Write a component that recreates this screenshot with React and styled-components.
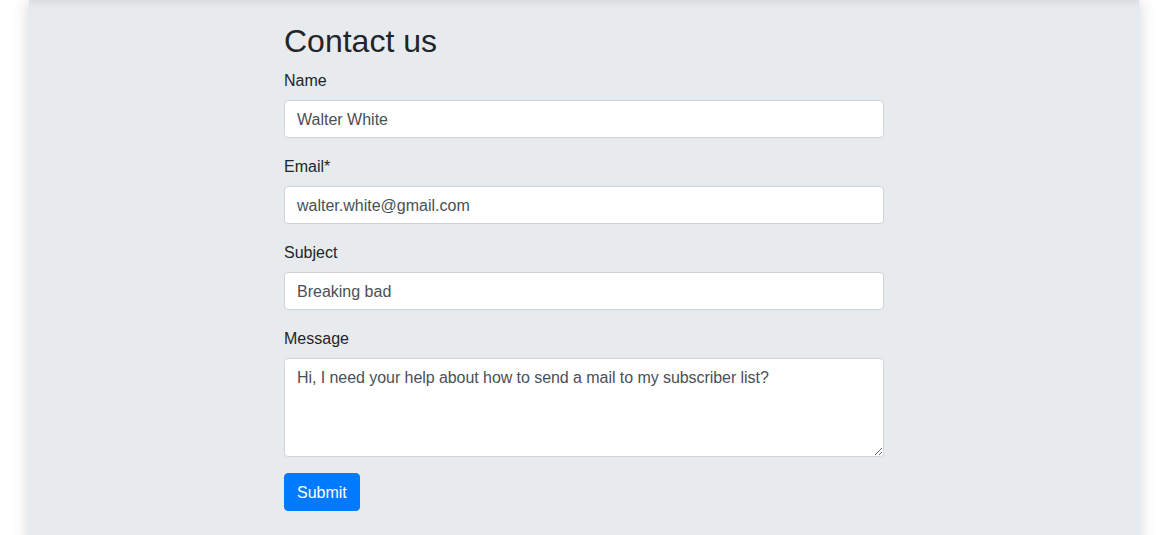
import React from "react";
import styled, { createGlobalStyle } from "styled-components";

const Global = createGlobalStyle`
  html, body { margin: 0; padding: 0; background: #fff; }
  body { font-family: "Liberation Sans", Arial, Helvetica, sans-serif; color: #212529; overflow: hidden; }
  * { box-sizing: border-box; }
`;

const Page = styled.div`
  width: 1110px;
  margin-left: 29px;
  min-height: 535px;
  background: #e8ebee;
  box-shadow: 0 0 16px rgba(0, 0, 0, 0.18), inset 0 10px 10px -10px rgba(0, 0, 0, 0.12);
  padding: 22px 0 40px;
  display: flex;
  justify-content: center;
`;

const Form = styled.form`
  width: 600px;
  display: flex;
  flex-direction: column;
`;

const Title = styled.h2`
  margin: 0 0 8px;
  font-size: 32px;
  font-weight: 500;
  line-height: 1.2;
  color: #212529;
`;

const Group = styled.div`
  display: flex;
  flex-direction: column;
  margin-bottom: 16px;
`;

const Label = styled.label`
  font-size: 16px;
  line-height: 24px;
  padding-top: 1px;
  margin-bottom: 7px;
  color: #212529;
`;

const Input = styled.input`
  height: 38px;
  width: 100%;
  padding: 7px 12px 5px;
  font: inherit;
  font-size: 16px;
  line-height: 24px;
  color: #495057;
  background: #fff;
  border: 1px solid #ced4da;
  border-radius: 4px;
  outline: none;
`;

const TextArea = styled.textarea`
  height: 99px;
  width: 100%;
  padding: 7px 12px 5px;
  font: inherit;
  font-size: 16px;
  line-height: 24px;
  letter-spacing: -0.06px;
  color: #495057;
  background: #fff;
  border: 1px solid #ced4da;
  border-radius: 4px;
  outline: none;
  resize: vertical;
`;

const Button = styled.button`
  align-self: flex-start;
  height: 38px;
  padding: 7px 12px 5px;
  font: inherit;
  font-size: 16px;
  line-height: 24px;
  color: #fff;
  background: #007bff;
  border: 1px solid #007bff;
  border-radius: 4px;
  cursor: pointer;
`;

const fields = [
  { id: "name", label: "Name", value: "Walter White" },
  { id: "email", label: "Email*", value: "walter.white@gmail.com" },
  { id: "subject", label: "Subject", value: "Breaking bad" },
];

export default function App() {
  return (
    <>
      <Global />
      <Page>
        <Form onSubmit={(e) => e.preventDefault()}>
          <Title>Contact us</Title>
          {fields.map((f) => (
            <Group key={f.id}>
              <Label htmlFor={f.id}>{f.label}</Label>
              <Input id={f.id} defaultValue={f.value} />
            </Group>
          ))}
          <Group>
            <Label htmlFor="message">Message</Label>
            <TextArea
              id="message"
              defaultValue="Hi, I need your help about how to send a mail to my subscriber list?"
            />
          </Group>
          <Button type="submit">Submit</Button>
        </Form>
      </Page>
    </>
  );
}
